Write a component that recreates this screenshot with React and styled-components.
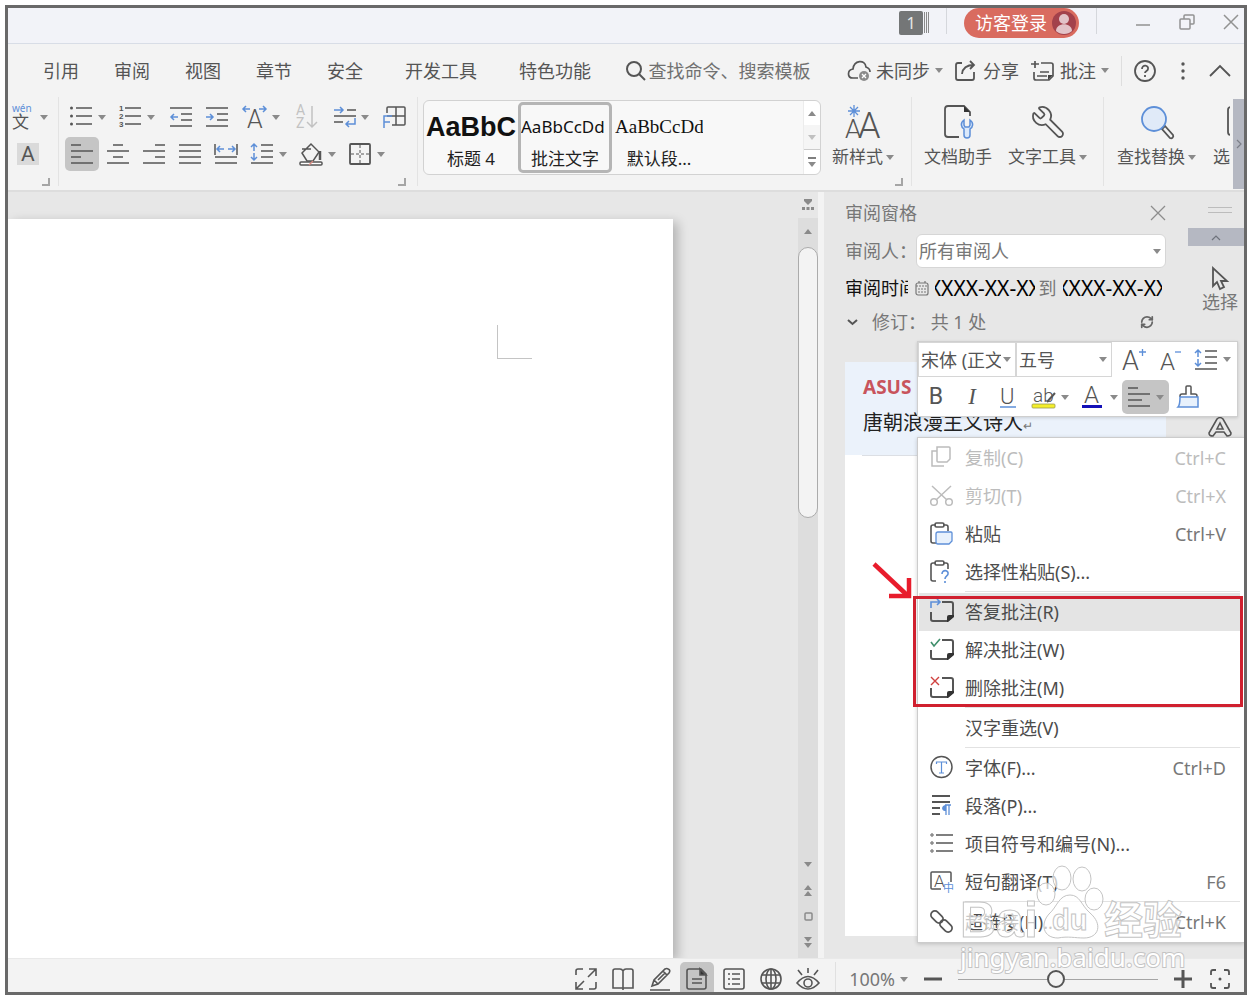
import styled, { createGlobalStyle, css } from "styled-components";
import { RefreshCw } from "lucide-react";

const GlobalStyle = createGlobalStyle`
    * {
        box-sizing: border-box;
    }
    body {
        margin: 0;
        background: #ffffff;
        color: #555555;
        font-family: "Noto Sans", "Noto Sans CJK SC", sans-serif;
        font-size: 18px;
        line-height: 24px;
    }
    button, input, select {
        font: inherit;
        color: inherit;
        margin: 0;
        padding: 0;
        border: 0;
        background: none;
        border-radius: 0;
        outline: none;
    }
    button {
        cursor: pointer;
        white-space: nowrap;
    }
`;

const BLUE = "#5d8fd8";

/* ---------- shell ---------- */

const Page = styled.div`
    min-height: 100vh;
    padding: 5px;
    display: flex;
`;

const Frame = styled.div`
    flex: 1;
    min-width: 0;
    display: flex;
    flex-direction: column;
    border: 3px solid #696969;
    background: #f3f3f3;
    overflow: hidden;
`;

const Svg = styled.svg`
    display: block;
    flex: none;
    fill: none;
    stroke: ${({ $color }) => $color || "#555555"};
    stroke-width: ${({ $weight }) => $weight || 1.5};
    overflow: visible;
    text {
        stroke: none;
        fill: ${({ $color }) => $color || "#555555"};
    }
`;

const Icon = ({ w = 24, h = w, color, weight, children }) => (
    <Svg width={w} height={h} viewBox={`0 0 ${w} ${h}`} $color={color} $weight={weight} aria-hidden="true">
        {children}
    </Svg>
);

const Caret = ({ up, color = "#8a8a8a" }) => (
    <Icon w={8} h={5}>
        <path d={up ? "M0 5 4 0l4 5z" : "M0 0h8L4 5z"} fill={color} stroke="none" />
    </Icon>
);

/* ---------- title bar ---------- */

const TitleBar = styled.header`
    height: 36px;
    display: flex;
    justify-content: flex-end;
    gap: 17px;
    background: #f2f3f8;
    border-bottom: 1px solid #d8dde6;
`;

const DocCount = styled.button`
    align-self: flex-start;
    height: 24px;
    margin-top: 3px;
    display: flex;
    gap: 1px;
    span {
        width: 24px;
        background: #747677;
        color: #e6e6e6;
        border-radius: 2px;
        font-size: 16px;
        line-height: 24px;
    }
    i {
        width: 1px;
        margin-top: 1px;
        height: 21px;
        background: #8a8a8a;
    }
`;

const TitleRule = styled.span`
    width: 1px;
    height: 26px;
    background: #d5d7dc;
    margin-right: ${({ $wide }) => ($wide ? "16px" : "0")};
`;

const Login = styled.button`
    width: 115px;
    height: 30px;
    padding: 0 3px 0 11px;
    display: flex;
    align-items: center;
    justify-content: space-between;
    border-radius: 15px;
    background: #d96b5f;
    color: #ffffff;
`;

const WindowButtons = styled.div`
    display: flex;
    gap: 18px;
    button {
        width: 26px;
        height: 28px;
        display: grid;
        place-items: center;
    }
`;

/* ---------- menu bar ---------- */

const MenuBar = styled.nav`
    height: 53px;
    flex: none;
    padding: 0 14px 0 35px;
    display: flex;
    align-items: center;
    justify-content: space-between;
`;

const Tabs = styled.div`
    display: flex;
    gap: 35px;
`;

const Tab = styled.button`
    margin-left: ${({ $wide }) => ($wide ? "7px" : "0")};
`;

const Search = styled.label`
    display: flex;
    align-items: center;
    gap: 3px;
    input {
        width: 164px;
        color: #666666;
    }
    input::placeholder {
        color: #707070;
        opacity: 1;
    }
`;

const Tools = styled.div`
    display: flex;
    align-items: center;
    gap: 12px;
`;

const ToolLink = styled.button`
    display: flex;
    align-items: center;
    gap: 5px;
`;

const ToolRule = styled.span`
    width: 1px;
    height: 30px;
    background: #dedede;
`;

/* ---------- ribbon ---------- */

const Ribbon = styled.div`
    height: 95px;
    flex: none;
    display: flex;
    border-bottom: 2px solid #dddddd;
`;

const Group = styled.section`
    flex: none;
    display: flex;
    flex-direction: column;
    padding: ${({ $pad }) => $pad || "8px 0 0"};
    border-right: 1px solid #e3e3e3;
    margin-bottom: 4px;
`;

const Row = styled.div`
    display: flex;
    align-items: center;
    gap: ${({ $gap }) => $gap ?? 12}px;
    padding: ${({ $pad }) => $pad || "0"};
`;

const IconButton = styled.button`
    height: ${({ $tall }) => ($tall ? "34px" : "24px")};
    display: flex;
    align-items: center;
    justify-content: center;
    gap: 5px;
    border-radius: 5px;
    ${({ $width }) => $width && css`width: ${$width}px;`}
    ${({ $active }) => $active && css`background: #c5c5c5;`}
`;

const Launcher = styled.button`
    width: 8px;
    height: 8px;
    align-self: flex-end;
    margin: 7px 8px 0 0;
    border-right: 2px solid #a5a5a5;
    border-bottom: 2px solid #a5a5a5;
`;

const Gallery = styled.div`
    flex: none;
    width: 398px;
    height: 75px;
    margin: 3px 0 0 5px;
    display: flex;
    border: 1px solid #d2d2d2;
    border-radius: 6px;
    background: #f8f8f8;
`;

const StyleCard = styled.button`
    width: 94px;
    height: 71px;
    margin-top: 1px;
    padding-top: ${({ $active }) => ($active ? "8px" : "11px")};
    display: flex;
    flex-direction: column;
    align-items: center;
    gap: 7px;
    border-radius: 5px;
    color: #222222;
    ${({ $active }) => $active && css`border: 3px solid #b5b5b5;`}
`;

const Sample = styled.span`
    width: ${({ $width }) => $width || 88}px;
    overflow: hidden;
    color: #111111;
    text-align: left;
    font: ${({ $font }) => $font};
    line-height: 28px;
`;

const StyleName = styled.span`
    font-size: 17px;
    line-height: 22px;
`;

const GallerySteps = styled.div`
    width: 17px;
    margin-left: auto;
    display: flex;
    flex-direction: column;
    border-left: 1px solid #ececec;
    button {
        flex: 1;
        display: grid;
        place-items: center;
        place-content: center;
        gap: 3px;
        background: #ffffff;
    }
    button:first-child {
        border-top-right-radius: 6px;
    }
    button:nth-child(2) {
        background: #f5f5f5;
    }
    button:last-child {
        border-top: 1px solid #cccccc;
        border-bottom-right-radius: 6px;
    }
`;

const BigGroup = styled.section`
    display: flex;
    flex: none;
    gap: 16px;
    padding: 7px 16px 0 12px;
    margin-bottom: 4px;
    border-right: 1px solid #e3e3e3;
`;

const LastGroup = styled.section`
    flex: 1;
    min-width: 0;
    overflow: hidden;
    display: flex;
    gap: 16px;
    padding: 7px 0 0 13px;
`;

const BigButton = styled.button`
    flex: none;
    display: flex;
    flex-direction: column;
    align-items: center;
    justify-content: flex-start;
    gap: 5px;
    font-size: 17px;
    span {
        display: flex;
        align-items: center;
        gap: 3px;
    }
`;

const RibbonScroll = styled.button`
    flex: none;
    width: 11px;
    margin: 2px 0 1px 3px;
    display: grid;
    place-items: center;
    background: #b5b8c2;
`;

/* ---------- workspace ---------- */

const Workspace = styled.main`
    position: relative;
    flex: 1;
    min-height: 766px;
    display: flex;
    background: #e7e7e7;
`;

const Canvas = styled.div`
    flex: 1;
    min-width: 0;
    display: flex;
    padding: 27px 125px 0 0;
    overflow: hidden;
`;

const Sheet = styled.article`
    flex: 1;
    padding: 106px 141px 0 0;
    background: #ffffff;
    box-shadow: 5px 3px 10px rgba(0, 0, 0, 0.22);
`;

const MarginCorner = styled.div`
    width: 35px;
    height: 34px;
    margin-left: auto;
    border-left: 1px solid #c4c4c4;
    border-bottom: 1px solid #c4c4c4;
`;

const Scroller = styled.div`
    width: 20px;
    flex: none;
    display: flex;
    flex-direction: column;
    padding-bottom: 3px;
    background: #dddddd;
    button {
        display: grid;
        place-items: center;
        place-content: center;
        gap: 1px;
        height: 26px;
    }
    button:first-child {
        background: #e7e7e7;
    }
`;

const Thumb = styled.div`
    height: 271px;
    margin: 3px 0 auto;
    border: 1px solid #ababab;
    border-radius: 10px;
    background: #f3f3f3;
`;

const Splitter = styled.div`
    width: 6px;
    flex: none;
    background: #f3f3f3;
`;

const Review = styled.aside`
    width: 364px;
    flex: none;
    display: flex;
    flex-direction: column;
    padding: 0 22px 22px 21px;
    color: #777777;
`;

const ReviewRow = styled.div`
    height: ${({ $height }) => $height}px;
    flex: none;
    display: flex;
    align-items: center;
    ${({ $spread }) => $spread && css`justify-content: space-between;`}
`;

const FieldLabel = styled.label`
    width: 71px;
    white-space: nowrap;
`;

const DateLabel = styled.span`
    width: 64px;
    margin-right: 7px;
    overflow: hidden;
    white-space: nowrap;
    color: #111111;
`;

const DateClip = styled.label`
    width: 101px;
    margin: 0 4px 0 6px;
    display: flex;
    justify-content: center;
    overflow: hidden;
    input {
        flex: none;
        width: 113px;
        color: #000000;
        font-size: 21px;
        text-align: center;
    }
`;

const SelectBox = styled.span`
    display: grid;
    align-items: center;
    width: ${({ $width }) => $width}px;
    height: ${({ $height }) => $height}px;
    background: #ffffff;
    border: 1px solid #d6d6d6;
    border-radius: ${({ $radius }) => $radius || 0}px;
    select, svg {
        grid-area: 1 / 1;
    }
    select {
        width: 100%;
        height: 100%;
        padding: 0 14px 0 2px;
        appearance: none;
    }
    svg {
        justify-self: end;
        margin-right: 4px;
        pointer-events: none;
    }
`;

const Comments = styled.section`
    flex: 1;
    margin-top: 26px;
    background: #ffffff;
`;

const Comment = styled.article`
    height: 93px;
    padding: 13px 17px 0 18px;
    background: #ebf2fb;
    h3 {
        margin: 0 0 12px;
        color: #c8545c;
        font-size: 19px;
        font-weight: 700;
        line-height: 24px;
    }
    p {
        margin: 0;
        color: #222222;
        font-family: "Liberation Serif", "Noto Sans CJK SC", serif;
        font-size: 20px;
        line-height: 24px;
    }
    small {
        font-size: 12px;
        color: #777777;
    }
`;

const CommentRule = styled.div`
    height: 1px;
    margin-left: 17px;
    background: #dcdfe4;
`;

const SideTools = styled.aside`
    width: 56px;
    flex: none;
    display: flex;
    flex-direction: column;
    align-items: center;
    color: #777777;
`;

const Grip = styled.div`
    width: 24px;
    height: 6px;
    margin: 15px 0 15px 8px;
    border-top: 1px solid #bcbcbc;
    border-bottom: 1px solid #bcbcbc;
`;

const SideUp = styled.button`
    width: 100%;
    height: 18px;
    display: grid;
    place-items: center;
    background: #b5b8c2;
`;

const SideButton = styled.button`
    margin: ${({ $gap }) => $gap}px 0 0 8px;
    display: flex;
    flex-direction: column;
    align-items: center;
`;

/* ---------- floating toolbar and context menu ---------- */

const MiniToolbar = styled.div`
    position: absolute;
    top: 149px;
    right: 6px;
    width: 321px;
    height: 76px;
    border: 1px solid #cfcfcf;
    background: #ffffff;
    box-shadow: 0 1px 3px rgba(0, 0, 0, 0.15);
`;

const Letter = styled.span`
    font-family: ${({ $serif }) => ($serif ? '"Liberation Serif", serif' : 'Roboto, "Noto Sans", sans-serif')};
    font-size: 23px;
    line-height: 24px;
    font-style: ${({ $italic }) => ($italic ? "italic" : "normal")};
`;

const ContextMenu = styled.div`
    position: absolute;
    top: 245px;
    right: 0;
    width: 327px;
    padding: 1px 4px 1px 1px;
    border: 1px solid #cccccc;
    border-right: 0;
    background: #ffffff;
    box-shadow: 0 1px 4px rgba(0, 0, 0, 0.18);
`;

const MenuItem = styled.button`
    width: 100%;
    height: 38px;
    padding: 0 14px 0 10px;
    display: flex;
    align-items: center;
    gap: 10px;
    background: ${({ $active }) => ($active ? "#e4e4e4" : "transparent")};
    color: ${({ disabled }) => (disabled ? "#bcbcbc" : "#4c4c4c")};
    kbd {
        margin-left: auto;
        font-family: inherit;
        color: ${({ disabled }) => (disabled ? "#bcbcbc" : "#777777")};
    }
`;

const MenuRule = styled.div`
    height: 2px;
    margin-left: 46px;
    border-top: 1px solid #e2e2e2;
`;

const Highlight = styled.div`
    position: absolute;
    top: 158px;
    left: -5px;
    right: 1px;
    height: 111px;
    border: 3px solid #d0202f;
    pointer-events: none;
`;

const Pointer = styled.div`
    position: absolute;
    top: 123px;
    left: -47px;
    pointer-events: none;
`;

const Watermark = styled.div`
    position: absolute;
    right: 58px;
    bottom: -18px;
    pointer-events: none;
    z-index: 2;
    svg text {
        fill: rgba(255, 255, 255, 0.7);
        stroke: #c4c4c4;
        stroke-width: 1;
        font-family: "Liberation Sans", "Noto Sans CJK SC", sans-serif;
        font-weight: 700;
    }
    svg text:last-child {
        fill: #ffffff;
        stroke-width: 2;
        paint-order: stroke;
        font-family: "Noto Sans", sans-serif;
        font-weight: 400;
    }
`;

/* ---------- status bar ---------- */

const StatusBar = styled.footer`
    height: 34px;
    flex: none;
    padding-right: 12px;
    display: flex;
    align-items: flex-end;
    justify-content: flex-end;
    border-top: 1px solid #e9e9e9;
    color: #777777;
`;

const Views = styled.div`
    display: flex;
    gap: 3px;
`;

const ViewButton = styled.button`
    width: 34px;
    height: 30px;
    padding-top: 4px;
    display: grid;
    place-items: center;
    border-radius: 5px 5px 0 0;
    background: ${({ $active }) => ($active ? "#c5c5c5" : "transparent")};
`;

const Zoom = styled.div`
    height: 30px;
    margin-left: 10px;
    padding: 4px 0 0 13px;
    display: flex;
    align-items: center;
    gap: 13px;
    border-left: 1px solid #e0e0e0;
    button {
        display: flex;
        align-items: center;
        gap: 5px;
    }
`;

const Slider = styled.input.attrs({ type: "range" })`
    width: 200px;
    height: 20px;
    appearance: none;
    &::-webkit-slider-runnable-track {
        height: 1px;
        background: #a5a5a5;
    }
    &::-webkit-slider-thumb {
        appearance: none;
        width: 18px;
        height: 18px;
        margin-top: -9px;
        border: 2px solid #555555;
        border-radius: 50%;
        background: #f3f3f3;
    }
`;

/* ---------- icons ---------- */

const AlignIcon = ({ lines }) => (
    <Icon>
        {lines.map(([a, b], i) => (
            <path key={i} d={`M${a} ${3 + i * 6}H${b}`} />
        ))}
    </Icon>
);

const BulletIcon = () => (
    <Icon>
        <path d="M7 3h16M7 11h16M7 19h16" />
        <g fill="#555555" stroke="none">
            <circle cx="2.5" cy="3" r="1.5" />
            <circle cx="2.5" cy="11" r="1.5" />
            <circle cx="2.5" cy="19" r="1.5" />
        </g>
    </Icon>
);

const NumberIcon = () => (
    <Icon>
        <path d="M7 3h16M7 11h16M7 19h16" />
        <g fontSize="8" fontWeight="700" fontFamily="Liberation Sans">
            <text x="1" y="6">1</text>
            <text x="1" y="14">2</text>
            <text x="1" y="22">3</text>
        </g>
    </Icon>
);

const IndentIcon = ({ out }) => (
    <Icon>
        <path d="M1 3h22M12 9h11M12 15h11M1 21h22" />
        <path d={out ? "M9 12H2M5 9l-3 3 3 3" : "M1 12h7M5 9l3 3-3 3"} stroke={BLUE} />
    </Icon>
);

const LineSpacingIcon = () => (
    <Icon>
        <path d="M11 3h12M11 9h12M11 15h12M1 21h22" />
        <path d="M4 9V2M1 5l3-3 3 3M4 11v7M1 15l3 3 3-3" stroke={BLUE} />
    </Icon>
);

const NoteIcon = ({ children }) => (
    <Icon w={26} h={24} weight={2}>
        <path d="M13 2h9q2 0 2 2v12l-6 5H4q-2 0-2-2v-7" />
        <path d="M25 15h-5q-2 0-2 2v5h1l6-5z" fill="#333333" stroke="none" />
        {children}
    </Icon>
);

const ClipboardIcon = ({ children }) => (
    <Icon w={26} h={24} weight={1.6}>
        <path d="M7 3H4Q2 3 2 5v14q0 2 2 2h3M14 3h3q2 0 2 2v4" />
        <rect x="6" y="1" width="9" height="4" rx="1.5" />
        {children}
    </Icon>
);

const WrenchPath =
    "M14.7 6.3a1 1 0 0 0 0 1.4l1.6 1.6a1 1 0 0 0 1.4 0l3.106-3.105c.32-.322.863-.22.983.218a6 6 0 0 1-8.259 7.057l-7.91 7.91a1 1 0 0 1-2.999-3l7.91-7.91a6 6 0 0 1 7.057-8.259c.438.12.54.662.219.984z";

const menuItems = [
    {
        text: "复制(C)",
        keys: "Ctrl+C",
        off: true,
        icon: (
            <Icon w={26} h={24} color="#bcbcbc">
                <path d="M15 20H3V5h5" />
                <path d="M8 1h12q1 0 1 1v11l-3 3H9q-1 0-1-1z" fill="#ffffff" />
            </Icon>
        ),
    },
    {
        text: "剪切(T)",
        keys: "Ctrl+X",
        off: true,
        icon: (
            <Icon w={26} h={24} color="#bcbcbc">
                <path d="M3 2l15 14M22 2 7 16" />
                <circle cx="5" cy="18" r="3.3" />
                <circle cx="20" cy="18" r="3.3" />
            </Icon>
        ),
    },
    {
        text: "粘贴",
        keys: "Ctrl+V",
        icon: (
            <ClipboardIcon>
                <path d="M9 10h13q1 0 1 1v8l-3 3H9q-2 0-2-2v-8q0-2 2-2z" fill="#e8f1fc" stroke={BLUE} strokeWidth="1.3" />
            </ClipboardIcon>
        ),
    },
    {
        text: "选择性粘贴(S)...",
        icon: (
            <ClipboardIcon>
                <path d="M13 14c0-5 7-4 6 0 0 2-3 2-3 5M16 21v2" stroke={BLUE} />
            </ClipboardIcon>
        ),
    },
    {
        rule: true,
        text: "答复批注(R)",
        active: true,
        icon: (
            <NoteIcon>
                <path d="M2 8V2h9M8-1l3 3-3 3" stroke={BLUE} strokeWidth="1.6" />
            </NoteIcon>
        ),
    },
    {
        text: "解决批注(W)",
        icon: (
            <NoteIcon>
                <path d="M2 4l3 4 6-7" stroke="#3f8f6b" strokeWidth="1.6" />
            </NoteIcon>
        ),
    },
    {
        text: "删除批注(M)",
        icon: (
            <NoteIcon>
                <path d="M2 1l8 8M10 1 2 9" stroke="#d0413f" strokeWidth="1.4" />
            </NoteIcon>
        ),
    },
    { rule: true, text: "汉字重选(V)", icon: <Icon w={26} h={24} /> },
    {
        rule: true,
        text: "字体(F)...",
        keys: "Ctrl+D",
        icon: (
            <Icon w={26} h={24}>
                <circle cx="12.5" cy="11" r="10.5" />
                <path d="M7.500 8V6h10v2M12.500 6v11M10 17h5" stroke={BLUE} strokeWidth="1.2" />
            </Icon>
        ),
    },
    {
        text: "段落(P)...",
        icon: (
            <Icon w={26} h={24} weight={1.8}>
                <path d="M3 2h18M3 8h18M3 14h8M3 20h8" />
                <path d="M22 11h-5c-5 0-5 6-1 6h1v-6" fill={BLUE} stroke="none" />
                <path d="M22 11h-6M17 11v10M20 11v10" stroke={BLUE} strokeWidth="1.3" />
            </Icon>
        ),
    },
    {
        text: "项目符号和编号(N)...",
        icon: (
            <Icon w={26} h={24}>
                <path d="M7 3h17M7 11h17M7 19h17" />
                <g strokeWidth="1">
                    <circle cx="3" cy="3" r="1.2" />
                    <circle cx="3" cy="11" r="1.2" />
                    <circle cx="3" cy="19" r="1.2" />
                </g>
            </Icon>
        ),
    },
    {
        text: "短句翻译(T)",
        keys: "F6",
        icon: (
            <Icon w={26} h={24}>
                <path d="M12 19H3q-1 0-1-1V3q0-1 1-1h18q1 0 1 1v9" />
                <text x="5" y="17" fontSize="17" fontWeight="300" fontFamily="Roboto">A</text>
                <text x="14" y="22" fontSize="11" fontFamily="Noto Sans CJK SC" style={{ fill: BLUE }}>中</text>
            </Icon>
        ),
    },
    {
        rule: true,
        text: "超链接(H)...",
        keys: "Ctrl+K",
        icon: (
            <Icon w={26} h={24} weight={1.7}>
                <rect x="-7" y="-4" width="14" height="8" rx="4" transform="translate(8 7) rotate(45)" />
                <rect x="-7" y="-4" width="14" height="8" rx="4" transform="translate(17 16) rotate(45)" />
            </Icon>
        ),
    },
];

const tabs = ["引用", "审阅", "视图", "章节", "安全", "开发工具", "特色功能"];

const Title = () => (
    <TitleBar>
        <DocCount aria-label="1 个文档"><span>1</span><i /><i /><i /></DocCount>
        <TitleRule />
        <Login>
            访客登录
            <Icon>
                <circle cx="12" cy="12" r="12" fill="#a3414b" stroke="none" />
                <circle cx="12" cy="8" r="5" fill="#e3c3c8" stroke="none" />
                <path d="M4 20c0-9 16-9 16 0-4 4-12 4-16 0z" fill="#e3c3c8" stroke="none" />
            </Icon>
        </Login>
        <TitleRule $wide />
        <WindowButtons>
            <button aria-label="最小化"><Icon w={16} color="#929292"><path d="M1 11h14" /></Icon></button>
            <button aria-label="还原">
                <Icon w={16} color="#929292">
                    <rect x="1" y="5" width="10" height="10" rx="1" />
                    <path d="M5 5V2q0-1 1-1h8q1 0 1 1v7q0 1-1 1h-3" />
                </Icon>
            </button>
            <button aria-label="关闭"><Icon w={16} color="#929292"><path d="M1 1l14 14M15 1 1 15" /></Icon></button>
        </WindowButtons>
    </TitleBar>
);

const Menu = () => (
    <MenuBar>
        <Tabs>
            {tabs.map((tab) => (
                <Tab key={tab} $wide={tab.length > 2}>{tab}</Tab>
            ))}
        </Tabs>
        <Search>
            <Icon w={20} weight={2}><circle cx="8" cy="8" r="7" /><path d="M13 13l6 6" /></Icon>
            <input placeholder="查找命令、搜索模板" aria-label="搜索" />
        </Search>
        <Tools>
            <ToolLink>
                <Icon w={24} h={22} weight={1.7}>
                    <path d="M11 18H6c-6 0-6-8 0-9C7 0 18-1 19 7c3 1 4 3 4 5" />
                    <circle cx="17" cy="16" r="5" fill="#8c8c8c" stroke="none" />
                    <path d="M15 14l4 4M19 14l-4 4" stroke="#ffffff" strokeWidth="1.3" />
                </Icon>
                未同步
                <Caret />
            </ToolLink>
            <ToolLink>
                <Icon w={23} h={22} weight={1.8}>
                    <path d="M7 3H3Q1 3 1 5v13q0 2 2 2h14q2 0 2-2v-6M7 14Q8 5 19 5M15 1l4 4-4 4" />
                </Icon>
                分享
            </ToolLink>
            <ToolLink>
                <Icon w={24} h={22} weight={1.7}>
                    <path d="M10 3h10q2 0 2 2v11l-4 4H5q-2 0-2-2v-6M4 1v7M0 4h8M9 12h9M6 16h10" />
                    <path d="M22 15l-5 5v-5z" fill="#444444" stroke="none" />
                </Icon>
                批注
                <Caret />
            </ToolLink>
            <ToolRule />
            <ToolLink aria-label="帮助">
                <Icon w={22} weight={1.8}>
                    <circle cx="11" cy="11" r="10" />
                    <path d="M8 9c0-5 7-4 6 0 0 2-3 2-3 4M11 15v2" />
                </Icon>
            </ToolLink>
            <ToolLink aria-label="更多">
                <Icon w={30} h={20}>
                    <g fill="#555555" stroke="none">
                        <circle cx="15" cy="3" r="1.7" />
                        <circle cx="15" cy="10" r="1.7" />
                        <circle cx="15" cy="17" r="1.7" />
                    </g>
                </Icon>
            </ToolLink>
            <ToolLink aria-label="收起功能区"><Icon w={20} h={12} weight={1.8}><path d="M0 11 10 1l10 10" /></Icon></ToolLink>
        </Tools>
    </MenuBar>
);

const ParagraphGroup = () => (
    <Group $pad="8px 3px 0 6px">
        <Row $gap={14} $pad="0 7px 0 4px">
            <Row>
                <IconButton aria-label="项目符号"><BulletIcon /><Caret /></IconButton>
                <IconButton aria-label="编号"><NumberIcon /><Caret /></IconButton>
            </Row>
            <Row>
                <IconButton aria-label="减少缩进"><IndentIcon out /></IconButton>
                <IconButton aria-label="增加缩进"><IndentIcon /></IconButton>
            </Row>
            <IconButton aria-label="字符缩放">
                <Icon>
                    <text x="4" y="23" fontSize="25" fontWeight="300" fontFamily="Roboto">A</text>
                    <path d="M7 4H0M3 1 0 4l3 3M16 4h7M20 1l3 3-3 3" stroke={BLUE} />
                </Icon>
                <Caret />
            </IconButton>
            <IconButton aria-label="排序">
                <Icon color="#c2c2c2">
                    <g fontSize="14" fontFamily="Roboto">
                        <text x="2" y="10">A</text>
                        <text x="2" y="23">Z</text>
                    </g>
                    <path d="M18 1v21M13 17l5 5 5-5" />
                </Icon>
            </IconButton>
            <IconButton aria-label="换行">
                <Icon>
                    <path d="M15 5h9M2 11h22M2 17h9" />
                    <path d="M2 5h9M8 2l3 3-3 3M23 13v6h-9M17 16l-3 3 3 3" stroke={BLUE} />
                </Icon>
                <Caret />
            </IconButton>
            <IconButton aria-label="制表位">
                <Icon>
                    <path d="M4 8V3q0-1 1-1h16q1 0 1 1v16q0 1-1 1H9M13 2v18M4 11h18" />
                    <path d="M1 23V11h8M1 17h6" stroke={BLUE} />
                </Icon>
            </IconButton>
        </Row>
        <Row $gap={2} $pad="8px 0 0">
            <IconButton $tall $width={34} $active aria-label="左对齐"><AlignIcon lines={[[1, 11], [1, 23], [1, 11], [1, 23]]} /></IconButton>
            <IconButton $tall $width={34} aria-label="居中"><AlignIcon lines={[[7, 17], [1, 23], [7, 17], [1, 23]]} /></IconButton>
            <IconButton $tall $width={34} aria-label="右对齐"><AlignIcon lines={[[13, 23], [1, 23], [13, 23], [1, 23]]} /></IconButton>
            <IconButton $tall $width={34} aria-label="两端对齐"><AlignIcon lines={[[1, 23], [1, 23], [1, 23], [1, 23]]} /></IconButton>
            <IconButton $tall $width={34} aria-label="分散对齐">
                <Icon>
                    <path d="M1 15h22M1 21h22M1 2v11M23 2v11" />
                    <path d="M10 7H3M6 4 3 7l3 3M14 7h7M18 4l3 3-3 3" stroke={BLUE} />
                </Icon>
            </IconButton>
            <Row $pad="0 0 0 5px">
                <IconButton aria-label="行距"><LineSpacingIcon /><Caret /></IconButton>
                <IconButton aria-label="底纹">
                    <Icon>
                        <path d="M3 11 12 2l8 8-6 9H8zM3 7h9" />
                        <path d="M21 9v9" strokeWidth="2.500" />
                        <rect x="1" y="20" width="22" height="3" rx="1" fill="#ffffff" />
                        <path d="M10 23l4-4" stroke="#d98a80" />
                    </Icon>
                    <Caret />
                </IconButton>
                <IconButton aria-label="边框">
                    <Icon weight={1.8}>
                        <rect x="2" y="2" width="20" height="20" rx="1" />
                        <path d="M12 3v18M3 12h18" strokeWidth="1" strokeDasharray="3 2" />
                    </Icon>
                    <Caret />
                </IconButton>
            </Row>
        </Row>
        <Launcher aria-label="段落设置" />
    </Group>
);

const RibbonBar = () => (
    <Ribbon>
        <Group $pad="8px 0 0 3px">
            <Row $gap={0} $pad="0 10px 0 0">
                <IconButton aria-label="拼音指南">
                    <Icon>
                        <text x="1" y="7" fontSize="10" fontFamily="Noto Sans" style={{ fill: BLUE }}>wén</text>
                        <text x="1" y="23" fontSize="17" fontFamily="Noto Sans CJK SC">文</text>
                    </Icon>
                    <Caret />
                </IconButton>
            </Row>
            <Row $pad="8px 0 0 6px">
                <IconButton $tall aria-label="字符底纹">
                    <Icon w={22}>
                        <rect width="22" height="22" fill="#dadada" stroke="none" />
                        <text x="4" y="18" fontSize="21" fontFamily="Roboto">A</text>
                    </Icon>
                </IconButton>
            </Row>
            <Launcher aria-label="字体设置" />
        </Group>
        <ParagraphGroup />
        <Gallery>
            <StyleCard>
                <Sample $width={90} $font='700 27px "Liberation Sans", sans-serif'>AaBbC</Sample>
                <StyleName>标题 4</StyleName>
            </StyleCard>
            <StyleCard $active>
                <Sample $font='400 17px "Noto Sans", sans-serif'>AaBbCcDd</Sample>
                <StyleName>批注文字</StyleName>
            </StyleCard>
            <StyleCard>
                <Sample $font='400 19px "Liberation Serif", serif'>AaBbCcDd</Sample>
                <StyleName>默认段...</StyleName>
            </StyleCard>
            <GallerySteps>
                <button aria-label="上一行"><Caret up /></button>
                <button aria-label="下一行"><Caret color="#c0c0c0" /></button>
                <button aria-label="更多样式">
                    <Icon w={8} h={2}><path d="M0 1h8" /></Icon>
                    <Caret />
                </button>
            </GallerySteps>
        </Gallery>
        <Group $pad="7px 0 0 11px">
            <Row $pad="0 17px 2px 0">
                <BigButton>
                    <Icon w={36} weight={1.7}>
                        <g fontFamily="Roboto" fontWeight="300">
                            <text x="0" y="34" fontSize="26">A</text>
                            <text x="13" y="34" fontSize="36">A</text>
                        </g>
                        <path d="M9 1v12M3 7h12M5 3l8 8M13 3l-8 8" stroke={BLUE} strokeWidth="1.3" />
                    </Icon>
                    <span>新样式<Caret /></span>
                </BigButton>
            </Row>
            <Launcher aria-label="样式设置" />
        </Group>
        <BigGroup>
            <BigButton>
                <Icon w={36} weight={1.8}>
                    <path d="M19 33H8q-3 0-3-3V5q0-3 3-3h16l6 6v4" />
                    <path d="M24 2v6h6z" fill="#333333" stroke="none" />
                    <path d="M24 16c-4 3-3 7 0 9v6q0 3 3 3t3-3v-6c3-2 4-6 0-9v5l-1 2h-4l-1-2z" fill="#dbe9fb" stroke={BLUE} strokeWidth="1.5" />
                </Icon>
                <span>文档助手</span>
            </BigButton>
            <BigButton>
                <Icon w={36} weight={1.2}>
                    <path d={WrenchPath} transform="translate(36 0) scale(-1.5 1.5)" />
                </Icon>
                <span>文字工具<Caret /></span>
            </BigButton>
        </BigGroup>
        <LastGroup>
            <BigButton>
                <Icon w={36} weight={1.8}>
                    <path d="M23 25l3-3 8 9c1 2-1 4-3 3z" />
                    <circle cx="15" cy="15" r="12" fill="#e0eaf8" stroke={BLUE} />
                </Icon>
                <span>查找替换<Caret /></span>
            </BigButton>
            <BigButton>
                <Icon w={36} weight={1.8}><path d="M20 3h-1q-3 0-3 3v22q0 3 3 3" /></Icon>
                <span>选择</span>
            </BigButton>
        </LastGroup>
        <RibbonScroll aria-label="向右滚动"><Icon w={6} h={8} color="#7c7f88" weight={1.2}><path d="M1 0l4 4-4 4" /></Icon></RibbonScroll>
    </Ribbon>
);

const ReviewPane = () => (
    <Review>
        <ReviewRow $height={42} $spread>
            审阅窗格
            <IconButton aria-label="关闭窗格"><Icon w={16} color="#8d8d8d" weight={1.3}><path d="M1 1l14 14M15 1 1 15" /></Icon></IconButton>
        </ReviewRow>
        <ReviewRow $height={34}>
            <FieldLabel htmlFor="reviewer">审阅人：</FieldLabel>
            <SelectBox $width={250} $height={34} $radius={6}>
                <select id="reviewer"><option>所有审阅人</option></select>
                <Caret />
            </SelectBox>
        </ReviewRow>
        <ReviewRow $height={40}>
            <DateLabel>审阅时间</DateLabel>
            <Icon w={14} h={15} color="#777777" weight={1.2}>
                <rect x="1" y="2" width="12" height="12" rx="2" />
                <path d="M1 5h12M4 0v3M10 0v3M3 8h8M3 11h8" strokeDasharray="2 1" />
            </Icon>
            <DateClip><input defaultValue="XXXX-XX-XX" aria-label="开始日期" /></DateClip>
            到
            <DateClip><input defaultValue="XXXX-XX-XX" aria-label="结束日期" /></DateClip>
        </ReviewRow>
        <ReviewRow $height={28} $spread>
            <Row $gap={14} $pad="0 0 0 2px">
                <Icon w={11} h={7} weight={2}><path d="M1 1l4.500 4L10 1" /></Icon>
                <span>修订： 共 1 处</span>
            </Row>
            <Row $pad="0 12px 0 0">
                <RefreshCw size={14} color="#666666" strokeWidth={3} />
            </Row>
        </ReviewRow>
        <Comments>
            <Comment>
                <h3>ASUS</h3>
                <p>唐朝浪漫主义诗人<small>↵</small></p>
            </Comment>
            <CommentRule />
        </Comments>
    </Review>
);

const Toolbar = () => (
    <MiniToolbar role="toolbar">
        <Row $gap={10}>
            <Row $gap={0}>
                <SelectBox $width={98} $height={35}>
                    <select aria-label="字体"><option>宋体 (正文</option></select>
                    <Caret />
                </SelectBox>
                <SelectBox $width={96} $height={35}>
                    <select aria-label="字号"><option>五号</option></select>
                    <Caret />
                </SelectBox>
            </Row>
            <Row>
                <IconButton aria-label="增大字号">
                    <Icon>
                        <text x="0" y="22" fontSize="27" fontWeight="300" fontFamily="Roboto">A</text>
                        <path d="M17 4h7M20.500 1v7" stroke={BLUE} strokeWidth="1.3" />
                    </Icon>
                </IconButton>
                <IconButton aria-label="减小字号">
                    <Icon>
                        <text x="2" y="22" fontSize="24" fontWeight="300" fontFamily="Roboto">A</text>
                        <path d="M17 4h6" stroke={BLUE} strokeWidth="1.3" />
                    </Icon>
                </IconButton>
                <IconButton aria-label="行距"><LineSpacingIcon /><Caret /></IconButton>
            </Row>
        </Row>
        <Row $gap={4} $pad="3px 0 0 6px">
            <Row>
                <IconButton $width={24} aria-label="加粗"><Letter>B</Letter></IconButton>
                <IconButton $width={24} aria-label="倾斜"><Letter $serif $italic>I</Letter></IconButton>
                <IconButton aria-label="下划线">
                    <Icon>
                        <text x="4" y="19" fontSize="22" fontWeight="300" fontFamily="Roboto">U</text>
                        <path d="M4 22h16" stroke={BLUE} />
                    </Icon>
                </IconButton>
                <IconButton aria-label="突出显示">
                    <Icon>
                        <rect x="0" y="19" width="23" height="4" rx="1" fill="#f4ee2a" stroke="#9a9a50" strokeWidth="0.800" />
                        <text x="1" y="17" fontSize="19" fontFamily="Roboto" fontWeight="300">ab</text>
                        <path d="M15 17l8-9" strokeWidth="2" />
                    </Icon>
                    <Caret />
                </IconButton>
                <IconButton aria-label="字体颜色">
                    <Icon>
                        <text x="3" y="18" fontSize="24" fontWeight="300" fontFamily="Roboto">A</text>
                        <rect x="1" y="20" width="20" height="3" fill="#1410b8" stroke="none" />
                    </Icon>
                    <Caret />
                </IconButton>
            </Row>
            <Row $gap={8}>
                <IconButton $tall $active $width={47} aria-label="对齐方式"><AlignIcon lines={[[1, 11], [1, 23], [1, 15], [1, 23]]} /><Caret /></IconButton>
                <IconButton aria-label="格式刷">
                    <Icon>
                        <path d="M3 12v-1q0-2 2-2h4V2q0-1 1-1h3q1 0 1 1v7h4q2 0 2 2v1" />
                        <path d="M3 12h18v10H1q2-2 2-10z" fill="#e8f1fc" stroke={BLUE} />
                    </Icon>
                </IconButton>
            </Row>
        </Row>
    </MiniToolbar>
);

const Popup = () => (
    <ContextMenu role="menu">
        {menuItems.map((item) => (
            <div key={item.text}>
                {item.rule && <MenuRule />}
                <MenuItem role="menuitem" disabled={item.off} $active={item.active}>
                    {item.icon}
                    <span>{item.text}</span>
                    {item.keys && <kbd>{item.keys}</kbd>}
                </MenuItem>
            </div>
        ))}
        <Highlight />
        <Pointer>
            <Icon w={42} h={40} color="#e81c2c" weight={4.5}>
                <path d="M3 3l33 31" />
                <path d="M38 17v18H18" />
            </Icon>
        </Pointer>
    </ContextMenu>
);

const Mark = () => (
    <Watermark>
        <Icon w={228} h={112}>
            <g fill="rgba(255,255,255,0.7)" stroke="#c4c4c4" strokeWidth="1">
                <ellipse cx="88" cy="30" rx="9" ry="11" />
                <ellipse cx="104" cy="14" rx="9" ry="12" />
                <ellipse cx="124" cy="15" rx="9" ry="12" />
                <ellipse cx="136" cy="35" rx="9" ry="11" />
                <path d="M112 31c10 0 11 10 20 18 13 11 9 25-6 25-9 0-16-2-26 0-15 0-18-14-9-24 8-7 10-19 21-19z" />
            </g>
            <text x="2" y="73" fontSize="50">Bai</text>
            <text x="94" y="66" fontSize="29">du</text>
            <text x="146" y="70" fontSize="39">经验</text>
            <text x="2" y="103" fontSize="26">jingyan.baidu.com</text>
        </Icon>
    </Watermark>
);

const views = [
    ["全屏", <path d="M9 2H4Q2 2 2 4v4M15 2h7v7M22 2l-8 8M22 15v5q0 2-2 2h-5M2 15v7h7M2 22l8-8" />],
    ["阅读", <path d="M12 4v19M12 4q-1-2-3-2H4Q2 2 2 4v17h10M12 4q1-2 3-2h5q2 0 2 2v17H12" />],
    ["写作", <path d="M2 23h20M4 19l2-6L17 2q2-1 3 0 3 1 1 4L10 17zM15 4l4 4M6 13l4 4M17 6l-7 7" />],
    ["页面", <><path d="M4 2h12l5 5v13q0 2-2 2H4q-2 0-2-2V4q0-2 2-2zM7 12h10M7 16h10" /><path d="M15 2v6h6z" fill="#333333" /></>],
    ["大纲", <><rect x="2" y="2" width="20" height="20" rx="2" /><path d="M6 7h2M10 7h8M6 12h2M10 12h8M6 17h2M10 17h8" /></>],
    ["Web", <><circle cx="12" cy="12" r="10" /><ellipse cx="12" cy="12" rx="5" ry="10" /><path d="M3 8h18M3 16h18M12 2v20" /></>],
    ["护眼", <><path d="M1 16q11-13 22 0-11 12-22 0zM12 1v5M2 3l4 5M22 3l-4 5" /><circle cx="12" cy="16" r="4" /></>],
];

const Status = () => (
    <StatusBar>
        <Views>
            {views.map(([name, drawing]) => (
                <ViewButton key={name} $active={name === "页面"} aria-label={name}>
                    <Icon weight={1.6}>{drawing}</Icon>
                </ViewButton>
            ))}
        </Views>
        <Zoom>
            <button>100%<Caret /></button>
            <button aria-label="缩小"><Icon weight={3}><path d="M3 12h18" /></Icon></button>
            <Slider min="0" max="100" defaultValue="49" aria-label="显示比例" />
            <button aria-label="放大"><Icon weight={3}><path d="M3 12h18M12 3v18" /></Icon></button>
            <button aria-label="适应窗口">
                <Icon weight={1.8}>
                    <path d="M8 3H5Q3 3 3 5v3M16 3h3q2 0 2 2v3M3 16v3q0 2 2 2h3M21 16v3q0 2-2 2h-3" />
                    <circle cx="12" cy="12" r="1.5" fill="#555555" stroke="none" />
                </Icon>
            </button>
        </Zoom>
    </StatusBar>
);

const App = () => {
    return (
        <Page>
            <GlobalStyle />
            <Frame>
                <Title />
                <Menu />
                <RibbonBar />
                <Workspace>
                    <Canvas>
                        <Sheet><MarginCorner /></Sheet>
                    </Canvas>
                    <Scroller>
                        <button aria-label="拆分"><Icon w={12} h={12}><path d="M2 0h8v2L6 6 2 2zM0 8h3v3H0zM4.500 8h3v3h-3zM9 8h3v3H9z" fill="#8a8a8a" stroke="none" /></Icon></button>
                        <button aria-label="向上"><Caret up /></button>
                        <Thumb />
                        <button aria-label="向下"><Caret /></button>
                        <button aria-label="上一页"><Caret up /><Caret up /></button>
                        <button aria-label="选择对象"><Icon w={9} color="#8a8a8a"><rect x="1" y="1" width="7" height="7" rx="1" /></Icon></button>
                        <button aria-label="下一页"><Caret /><Caret /></button>
                    </Scroller>
                    <Splitter />
                    <ReviewPane />
                    <SideTools>
                        <Grip />
                        <SideUp aria-label="向上滚动"><Icon w={8} h={5} color="#6f737c" weight={1.2}><path d="M0 5 4 1l4 4" /></Icon></SideUp>
                        <SideButton $gap={20}>
                            <Icon w={18} h={24} weight={1.8}><path d="M2 2v18l4-4 3 7 4-2-3-6h6z" /></Icon>
                            选择
                        </SideButton>
                        <SideButton $gap={102} aria-label="样式">
                            <Icon w={24} h={22} weight={1.6}>
                                <path d="M9 3q3-3 6 0l8 14q0 3-4 3l-3-4H8l-3 4q-4 0-4-3zM12 7l-3 6h6z" />
                            </Icon>
                        </SideButton>
                    </SideTools>
                    <Toolbar />
                    <Popup />
                    <Mark />
                </Workspace>
                <Status />
            </Frame>
        </Page>
    );
};

export default App;
